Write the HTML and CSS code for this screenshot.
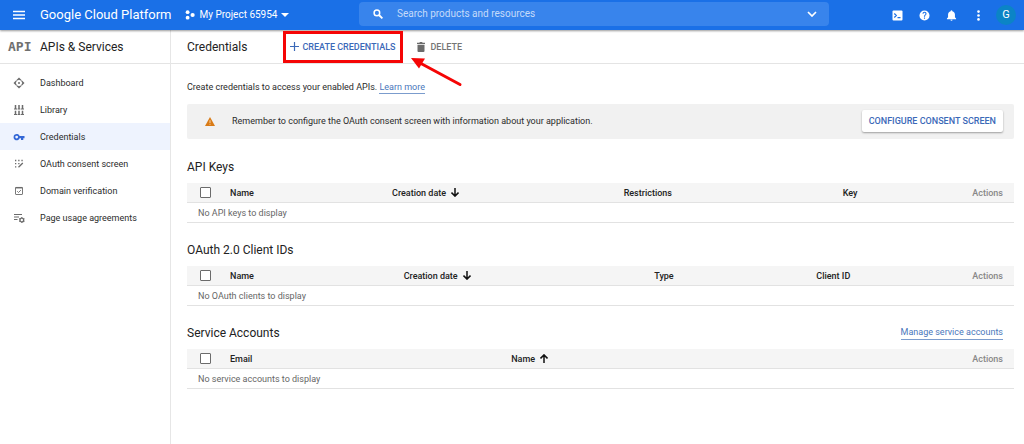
FILE: index.html
```html
<!DOCTYPE html>
<html lang="en">
<head>
<meta charset="utf-8">
<title>Credentials – APIs &amp; Services</title>
<link rel="stylesheet" href="styles.css">
</head>
<body>
<header class="topbar">
  <div class="topbar-start">
    <button class="icon-btn menu-btn" aria-label="Menu"><svg width="12" height="10" viewBox="0 0 12 10" stroke="#fff" stroke-width="1.3"><path d="M0 1.500h12M0 5h12M0 8.500h12"/></svg></button>
    <a class="brand" href="#">Google Cloud Platform</a>
    <button class="project">
      <svg width="10" height="10" viewBox="0 0 10 10" fill="#fff"><circle cx="2.600" cy="2.200" r="1.900"/><circle cx="7.600" cy="5" r="2.100"/><circle cx="2.600" cy="7.700" r="1.900"/></svg>
      <span>My Project 65954</span>
      <svg width="8" height="4" viewBox="0 0 8 4" fill="#fff"><path d="M0 0h8L4 4z"/></svg>
    </button>
  </div>
  <form class="search">
    <svg width="10" height="10" viewBox="0 0 10 10" fill="none" stroke="#fff"><circle cx="3.900" cy="3.900" r="2.800" stroke-width="1.500"/><path d="M6 6l3.400 3.400" stroke-width="1.800"/></svg>
    <input class="search-input" type="text" aria-label="Search" placeholder="Search products and resources">
    <button type="button" class="icon-btn" aria-label="Expand search"><svg width="10" height="6" viewBox="0 0 10 6" fill="none" stroke="#fff" stroke-width="1.700"><path d="M1 1l4 4 4-4"/></svg></button>
  </form>
  <div class="topbar-end">
    <button class="icon-btn" aria-label="Cloud Shell"><svg width="11" height="11" viewBox="0 0 11 11"><rect x=".5" y=".5" width="10" height="10" rx="1" fill="#fff"/><path d="M2.300 3.500l2 2-2 2M5.500 7.700h3" fill="none" stroke="#1a6fe6" stroke-width="1.200"/></svg></button>
    <button class="icon-btn" aria-label="Help"><svg width="11" height="11" viewBox="0 0 24 24" fill="#fff"><path d="M12 1a11 11 0 1 0 0 22 11 11 0 0 0 0-22zm1.200 18h-2.400v-2.400h2.400zm2.300-8.500l-1 1.100c-.9.900-1.300 1.600-1.300 3.200h-2.400v-.6c0-1.300.5-2.400 1.300-3.200l1.400-1.400c.4-.4.600-.9.600-1.500a2.100 2.100 0 0 0-4.200 0H7.500a4.500 4.500 0 0 1 9 0c0 1-.4 1.800-1 2.400z"/></svg></button>
    <button class="icon-btn" aria-label="Notifications"><svg width="11" height="11" viewBox="0 0 24 24" fill="#fff"><path d="M12 23.500a2.300 2.300 0 0 0 2.300-2.300H9.700A2.300 2.300 0 0 0 12 23.500zM19.500 16v-6c0-3.600-2-6.300-5.700-7.200v-.6a1.800 1.800 0 0 0-3.600 0v.6C6.500 3.700 4.500 6.400 4.500 10v6L2 18.500V20h20v-1.500z"/></svg></button>
    <button class="icon-btn" aria-label="More"><svg width="11" height="11" viewBox="0 0 11 11" fill="#fff"><circle cx="5.500" cy="1.600" r="1.300"/><circle cx="5.500" cy="5.500" r="1.300"/><circle cx="5.500" cy="9.400" r="1.300"/></svg></button>
    <button class="avatar" aria-label="Account">G</button>
  </div>
</header>

<div class="shell">
  <aside class="sidebar">
    <div class="sidebar-head"><span class="api-logo">API</span><span class="product">APIs &amp; Services</span></div>
    <nav class="nav">
      <a class="nav-item" href="#"><svg width="12" height="12" viewBox="0 0 12 12" fill="#6b6b6b"><path d="M6 .5L8.500 3v.6h-1L6 2.700l-1.500.9h-1V3zM6 11.500L8.500 9v-.6h-1L6 9.300l-1.500-.9h-1V9zM.5 6L3 3.500h.6v1L2.700 6l.9 1.500v1H3zM11.500 6L9 3.500h-.6v1L9.300 6l-.9 1.500v1H9z"/><circle cx="6" cy="6" r="1"/></svg>Dashboard</a>
      <a class="nav-item" href="#"><svg width="12" height="12" viewBox="0 0 12 12" fill="none" stroke="#6b6b6b"><path d="M2.500 1v4M6 1v4M9.500 1v4M2.500 6.700v4M6 6.700v4M9.500 6.700v4" stroke-width="1.500"/><path d="M1 5h3M4.600 5h2.800M8 5h3M1 10.500h3M4.600 10.500h2.800M8 10.500h3" stroke-width="1"/></svg>Library</a>
      <a class="nav-item active" href="#"><svg width="12" height="12" viewBox="0 0 24 24" fill="#3367d6"><path d="M13.300 10a6.300 6.300 0 1 0 0 4.500H16V18h4.500v-3.500H23V10zM7.300 15a2.800 2.800 0 1 1 0-5.600 2.800 2.800 0 0 1 0 5.600z"/></svg>Credentials</a>
      <a class="nav-item" href="#"><svg width="12" height="12" viewBox="0 0 12 12" fill="none" stroke="#6b6b6b"><path d="M2 2.500h1.300M5.200 2.500h1.300M8.400 2.500h1.300M2 5.700h1.300M5.200 5.700h1.300M2 8.900h1.300" stroke-width="1.300"/><path d="M5.500 9.300L9.800 5" stroke-width="1.300"/></svg>OAuth consent screen</a>
      <a class="nav-item" href="#"><svg width="12" height="12" viewBox="0 0 12 12" fill="none" stroke="#6b6b6b"><rect x="2.500" y="2.500" width="7" height="7" rx=".5" stroke-width=".9"/><path d="M2.500 2.700h7" stroke-width="1.500"/><path d="M4.200 6.200l1.300 1.300 2.400-2.400" stroke-width=".9"/></svg>Domain verification</a>
      <a class="nav-item" href="#"><svg width="12" height="12" viewBox="0 0 12 12" fill="none" stroke="#6b6b6b"><path d="M1 2.500h8M1 5h5M1 7.500h3.500" stroke-width="1.200"/><circle cx="8.800" cy="8" r="1.900" stroke-width="1.400"/><path d="M8.800 5v1M8.800 10v1M6.200 6.500l.9.500M10.500 9l.9.500M6.200 9.500l.9-.5M10.500 7l.9-.5" stroke-width="1"/></svg>Page usage agreements</a>
    </nav>
  </aside>

  <main class="main">
    <div class="toolbar">
      <h1 class="page-title">Credentials</h1>
      <div class="highlight">
        <button class="tool-btn create"><svg width="9" height="9" viewBox="0 0 9 9" stroke="#3b69b8" stroke-width="1.200"><path d="M4.500 0v9M0 4.500h9"/></svg>CREATE CREDENTIALS</button>
        <svg class="pointer" width="54" height="32" viewBox="0 0 54 32"><path d="M11 7.500L50 28.500" stroke="#f50505" stroke-width="3" stroke-linecap="round"/><path d="M1 2l14 .5-6 10z" fill="#f50505"/></svg>
      </div>
      <button class="tool-btn delete"><svg width="8" height="10" viewBox="0 0 8 10" fill="#6b6b6b"><path d="M0 .8h2.300L3 0h2l.7.800H8V2H0zM.5 2.700h7V9a1 1 0 0 1-1 1h-5a1 1 0 0 1-1-1z"/></svg>DELETE</button>
    </div>
    <div class="content">
      <p class="intro">Create credentials to access your enabled APIs. <a class="link" href="#">Learn more</a></p>
      <div class="banner">
        <svg width="10" height="9" viewBox="0 0 10 9"><path d="M5 0l5 9H0z" fill="#d97b16"/><path d="M5 3.200v2.800M5 6.800v1" stroke="#fbe3c4" stroke-width=".8"/></svg>
        <span class="banner-text">Remember to configure the OAuth consent screen with information about your application.</span>
        <button class="raised-btn">CONFIGURE CONSENT SCREEN</button>
      </div>

      <section class="section">
        <div class="section-head"><h2 class="section-title">API Keys</h2></div>
        <table class="grid">
          <colgroup><col class="c-check"><col class="k-name"><col class="k-date"><col class="k-restrict"><col></colgroup>
          <thead><tr>
            <th><input class="check" type="checkbox" aria-label="Select all API keys"></th>
            <th>Name</th>
            <th>Creation date <svg class="sort" width="8" height="9" viewBox="0 0 8 9" fill="none" stroke="#111" stroke-width="1.500"><path d="M4 0v8M.5 4.600L4 8.100l3.500-3.500"/></svg></th>
            <th>Restrictions</th>
            <th><div class="last"><span>Key</span><span class="actions">Actions</span></div></th>
          </tr></thead>
          <tbody><tr><td colspan="5">No API keys to display</td></tr></tbody>
        </table>
      </section>

      <section class="section">
        <div class="section-head"><h2 class="section-title">OAuth 2.0 Client IDs</h2></div>
        <table class="grid">
          <colgroup><col class="c-check"><col class="o-name"><col class="o-date"><col class="o-type"><col></colgroup>
          <thead><tr>
            <th><input class="check" type="checkbox" aria-label="Select all OAuth clients"></th>
            <th>Name</th>
            <th>Creation date <svg class="sort" width="8" height="9" viewBox="0 0 8 9" fill="none" stroke="#111" stroke-width="1.500"><path d="M4 0v8M.5 4.600L4 8.100l3.500-3.500"/></svg></th>
            <th>Type</th>
            <th><div class="last"><span>Client ID</span><span class="actions">Actions</span></div></th>
          </tr></thead>
          <tbody><tr><td colspan="5">No OAuth clients to display</td></tr></tbody>
        </table>
      </section>

      <section class="section">
        <div class="section-head"><h2 class="section-title">Service Accounts</h2><a class="link" href="#">Manage service accounts</a></div>
        <table class="grid">
          <colgroup><col class="c-check"><col class="s-email"><col></colgroup>
          <thead><tr>
            <th><input class="check" type="checkbox" aria-label="Select all service accounts"></th>
            <th>Email</th>
            <th><div class="last"><span>Name <svg class="sort" width="8" height="9" viewBox="0 0 8 9" fill="none" stroke="#111" stroke-width="1.500"><path d="M4 9V1M.5 4.400L4 .9l3.500 3.500"/></svg></span><span class="actions">Actions</span></div></th>
          </tr></thead>
          <tbody><tr><td colspan="3">No service accounts to display</td></tr></tbody>
        </table>
      </section>
    </div>
  </main>
</div>
</body>
</html>
```
FILE: styles.css
```css
* { box-sizing: border-box; }
body {
  margin: 0;
  min-height: 100vh;
  display: flex;
  flex-direction: column;
  background: #fff;
  color: #2b2b2b;
  font: 9px/16px Roboto, "Liberation Sans", sans-serif;
}
button, input { font: inherit; color: inherit; }
button { border: 0; padding: 0; background: none; cursor: pointer; }
svg { display: block; flex: none; }
a { color: inherit; text-decoration: none; }
h1, h2, p { margin: 0; font-weight: 400; }

.topbar {
  display: flex;
  align-items: center;
  height: 30px;
  padding: 0 8px 0 13px;
  background: #1a70e7;
  color: #fff;
  box-shadow: 0 1px 2px rgba(0, 0, 0, .4);
  position: relative;
}
.topbar-start { display: flex; align-items: center; width: 346px; }
.icon-btn { display: flex; align-items: center; justify-content: center; }
.brand { margin-left: 15px; font-size: 13px; }
.project { display: flex; align-items: center; margin-left: 14px; gap: 4px; font-size: 10px; }
.search {
  flex: 1;
  display: flex;
  align-items: center;
  height: 24px;
  margin: 0 63px 2px 0;
  padding: 0 12px 0 14px;
  border-radius: 4px;
  background: #3884ec;
}
.search-input {
  flex: 1;
  min-width: 0;
  margin-left: 14px;
  padding: 0;
  border: 0;
  outline: 0;
  background: none;
  font-size: 10px;
}
.search-input::placeholder { color: #c5dbfa; opacity: 1; }
.topbar-end { display: flex; align-items: center; gap: 16px; }
.avatar {
  width: 20px;
  height: 20px;
  margin-left: -4px;
  border-radius: 50%;
  background: #0b84c6;
  font-size: 11px;
  line-height: 20px;
}

.shell { flex: 1; display: flex; }
.sidebar { width: 171px; flex: none; border-right: 1px solid #e6e6e6; }
.sidebar-head, .toolbar {
  display: flex;
  align-items: center;
  height: 34px;
  border-bottom: 1px solid #e4e4e4;
}
.sidebar-head { padding-left: 8px; }
.api-logo { width: 32px; color: #707070; font: bold 13px/16px "DejaVu Sans Mono", monospace; }
.product, .page-title { font-size: 12px; color: #222; }
.nav { padding-top: 5px; }
.nav-item { display: flex; align-items: center; gap: 15px; height: 27px; padding-left: 13px; }
.nav-item.active { background: #eef3fe; }

.main { flex: 1; min-width: 0; }
.toolbar { padding-left: 16px; }
.highlight {
  position: relative;
  display: flex;
  align-items: center;
  height: 32px;
  margin-left: 36px;
  padding: 0 5px 0 4px;
  border: 3px solid #f50505;
}
.pointer { position: absolute; left: 124px; top: 22px; }
.tool-btn { display: flex; align-items: center; font-weight: 500; }
.create { gap: 3px; color: #3b69b8; }
.delete { gap: 5px; margin-left: 14px; color: #757575; }

.content { padding: 15px 10px 16px 16px; }
.link { padding-bottom: 1px; color: #4a77bb; border-bottom: 1px solid #7b9ccd; }
.banner {
  display: flex;
  align-items: center;
  margin-top: 9px;
  padding: 6px 11px 7px 18px;
  border-radius: 2px;
  background: #f1f1f1;
}
.banner-text { flex: 1; margin-left: 17px; }
.raised-btn {
  height: 22px;
  padding: 0 7px;
  border-radius: 2px;
  background: #fff;
  color: #3b69b8;
  font-weight: 500;
  box-shadow: 0 1px 2px rgba(0, 0, 0, .35);
}

.section { padding-top: 17px; }
.banner + .section { padding-top: 18px; }
.section-head {
  display: flex;
  align-items: center;
  justify-content: space-between;
  height: 20px;
  margin-bottom: 6px;
  padding-right: 11px;
}
.section-head .link { line-height: 12px; }
.section-title { font-size: 12px; color: #222; }
.grid { width: 100%; table-layout: fixed; border-collapse: separate; border-spacing: 0; }
.grid th, .grid td {
  height: 20px;
  padding: 0;
  border-bottom: 1px solid #e2e2e2;
  text-align: left;
  line-height: 16px;
}
.grid th { background: #f5f5f5; font-weight: 500; color: #222; white-space: nowrap; }
.grid td { padding-left: 11px; color: #666; }
.check {
  appearance: none;
  display: block;
  width: 11px;
  height: 11px;
  margin: 0 0 0 13px;
  border: 1px solid #6b6b6b;
  border-radius: 1px;
  background: #fff;
}
.sort { display: inline-block; margin-left: 3px; vertical-align: -1px; }
.last { display: flex; justify-content: space-between; padding-right: 11px; }
.actions { color: #888; }
.c-check { width: 43px; }
.k-name { width: 19.6%; }
.k-date { width: 28%; }
.k-restrict { width: 26.5%; }
.o-name { width: 21%; }
.o-date { width: 30.3%; }
.o-type { width: 19.6%; }
.s-email { width: 34%; }
```
